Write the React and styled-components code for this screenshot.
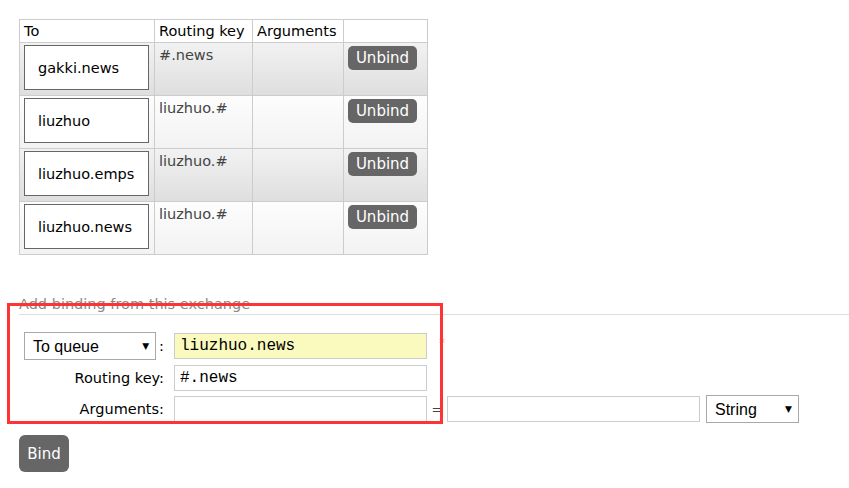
import React from 'react';
import styled, { createGlobalStyle } from 'styled-components';

const GlobalStyle = createGlobalStyle`
  html, body {
    margin: 0;
    padding: 0;
    background: #fff;
  }
  body {
    font-family: "DejaVu Sans", Verdana, sans-serif;
    font-size: 14.5px;
    color: #000;
  }
`;

const Page = styled.div`
  padding: 19px 0 0 19px;
  width: 849px;
  height: 488px;
  box-sizing: border-box;
  overflow: hidden;
`;

const List = styled.table`
  border-collapse: collapse;
  table-layout: fixed;
  width: 409px;
  border: 1px solid #ccc;
`;

const Th = styled.th`
  width: ${({ $w }) => $w}px;
  text-align: left;
  font-weight: normal;
  padding: 2px 4px;
  border: 1px solid #ccc;
  height: 18px;
  line-height: 18px;
  white-space: nowrap;
  box-sizing: border-box;
`;

const Row = styled.tr`
  background: ${({ $alt }) =>
    $alt
      ? 'linear-gradient(#fdfdfd, #f2f2f2)'
      : 'linear-gradient(#f2f2f2, #dedede)'};
`;

const Td = styled.td`
  vertical-align: top;
  padding: 2px 4px 0;
  border: 1px solid #ccc;
  height: 50px;
  line-height: 20px;
  color: ${({ $muted }) => ($muted ? '#444' : '#000')};
`;

const TargetBox = styled.div`
  width: 125px;
  height: 45px;
  box-sizing: border-box;
  border: 1px solid #666;
  background: #fff;
  display: flex;
  align-items: center;
  padding-left: 13px;
`;

const SmallButton = styled.button`
  display: block;
  width: 69px;
  height: 24px;
  margin-top: 1px;
  border: none;
  border-radius: 5px;
  background: #666;
  color: #fff;
  font-family: "DejaVu Sans", Verdana, sans-serif;
  font-size: 15px;
  padding: 0;
  cursor: pointer;
`;

const Section = styled.div`
  position: relative;
  margin-top: 40px;
`;

const Heading = styled.h2`
  margin: 0;
  font-size: 14.5px;
  font-weight: normal;
  color: #888;
  line-height: 18px;
  padding-bottom: 1px;
  border-bottom: 1px solid #ddd;
`;

const Form = styled.div`
  padding-top: 15px;
`;

const FormRow = styled.div`
  display: flex;
  align-items: center;
  min-height: 31px;
  padding: 2px 0;
  box-sizing: border-box;
`;

const Label = styled.div`
  width: 155px;
  padding: 0 10px 0 5px;
  box-sizing: border-box;
  display: flex;
  align-items: center;
  justify-content: flex-end;
  gap: 3px;
  white-space: nowrap;
`;

const SelectWrap = styled.div`
  position: relative;
  width: ${({ $w }) => $w}px;
  height: 28px;
  margin-left: ${({ $ml }) => $ml || 0}px;
`;

const Select = styled.select`
  appearance: none;
  width: 100%;
  height: 100%;
  border: 1px solid #a9a9a9;
  background: #fff;
  font-family: "Liberation Sans", Arial, sans-serif;
  font-size: 16px;
  color: #000;
  padding: 0 0 0 8px;
  margin: 0;
  border-radius: 0;
  outline: none;
`;

const Arrow = styled.span`
  position: absolute;
  right: 7px;
  top: 9px;
  font-size: 9px;
  line-height: 10px;
  color: #000;
  pointer-events: none;
`;

const Input = styled.input`
  width: 253px;
  height: 26px;
  box-sizing: border-box;
  border: 1px solid #ccc;
  background: ${({ $highlight }) => ($highlight ? '#fafabe' : '#fff')};
  font-family: "Liberation Mono", "Courier New", monospace;
  font-size: 16px;
  padding: 0 5px;
  margin: 0;
  color: #000;
  outline: none;
`;

const Mandatory = styled.span`
  color: #f99;
  font-size: 12px;
  margin: -6px 0 0 12px;
`;

const Equals = styled.span`
  width: 20px;
  text-align: center;
  color: #444;
  font-size: 13px;
`;

const BigButton = styled.button`
  margin-top: 10px;
  width: 50px;
  height: 37px;
  border: none;
  border-radius: 6px;
  background: #666;
  color: #fff;
  font-family: "DejaVu Sans", Verdana, sans-serif;
  font-size: 15px;
  padding: 0;
  cursor: pointer;
`;

const Highlight = styled.div`
  position: absolute;
  left: -12px;
  top: 8px;
  width: 436px;
  height: 121px;
  box-sizing: border-box;
  border: 3px solid #f33;
  pointer-events: none;
`;

const bindings = [
  { to: 'gakki.news', key: '#.news' },
  { to: 'liuzhuo', key: 'liuzhuo.#' },
  { to: 'liuzhuo.emps', key: 'liuzhuo.#' },
  { to: 'liuzhuo.news', key: 'liuzhuo.#' }
];

const App = () => {
  return (
    <Page>
      <GlobalStyle />
      <List>
        <thead>
          <tr>
            <Th $w={135}>To</Th>
            <Th $w={98}>Routing key</Th>
            <Th $w={91}>Arguments</Th>
            <Th $w={84}></Th>
          </tr>
        </thead>
        <tbody>
          {bindings.map((b, i) => (
            <Row key={b.to} $alt={i % 2 === 1}>
              <Td>
                <TargetBox>{b.to}</TargetBox>
              </Td>
              <Td $muted>{b.key}</Td>
              <Td></Td>
              <Td>
                <SmallButton>Unbind</SmallButton>
              </Td>
            </Row>
          ))}
        </tbody>
      </List>

      <Section>
        <Heading>Add binding from this exchange</Heading>
        <Form>
          <FormRow>
            <Label>
              <SelectWrap $w={133}>
                <Select defaultValue="queue">
                  <option value="queue">To queue</option>
                  <option value="exchange">To exchange</option>
                </Select>
                <Arrow>▼</Arrow>
              </SelectWrap>
              :
            </Label>
            <Input $highlight defaultValue="liuzhuo.news" />
            <Mandatory>*</Mandatory>
          </FormRow>
          <FormRow>
            <Label>Routing key:</Label>
            <Input defaultValue="#.news" />
          </FormRow>
          <FormRow>
            <Label>Arguments:</Label>
            <Input />
            <Equals>=</Equals>
            <Input />
            <SelectWrap $w={93} $ml={6}>
              <Select defaultValue="string">
                <option value="string">String</option>
                <option value="number">Number</option>
                <option value="boolean">Boolean</option>
              </Select>
              <Arrow>▼</Arrow>
            </SelectWrap>
          </FormRow>
        </Form>
        <BigButton>Bind</BigButton>
        <Highlight />
      </Section>
    </Page>
  );
};

export default App;
